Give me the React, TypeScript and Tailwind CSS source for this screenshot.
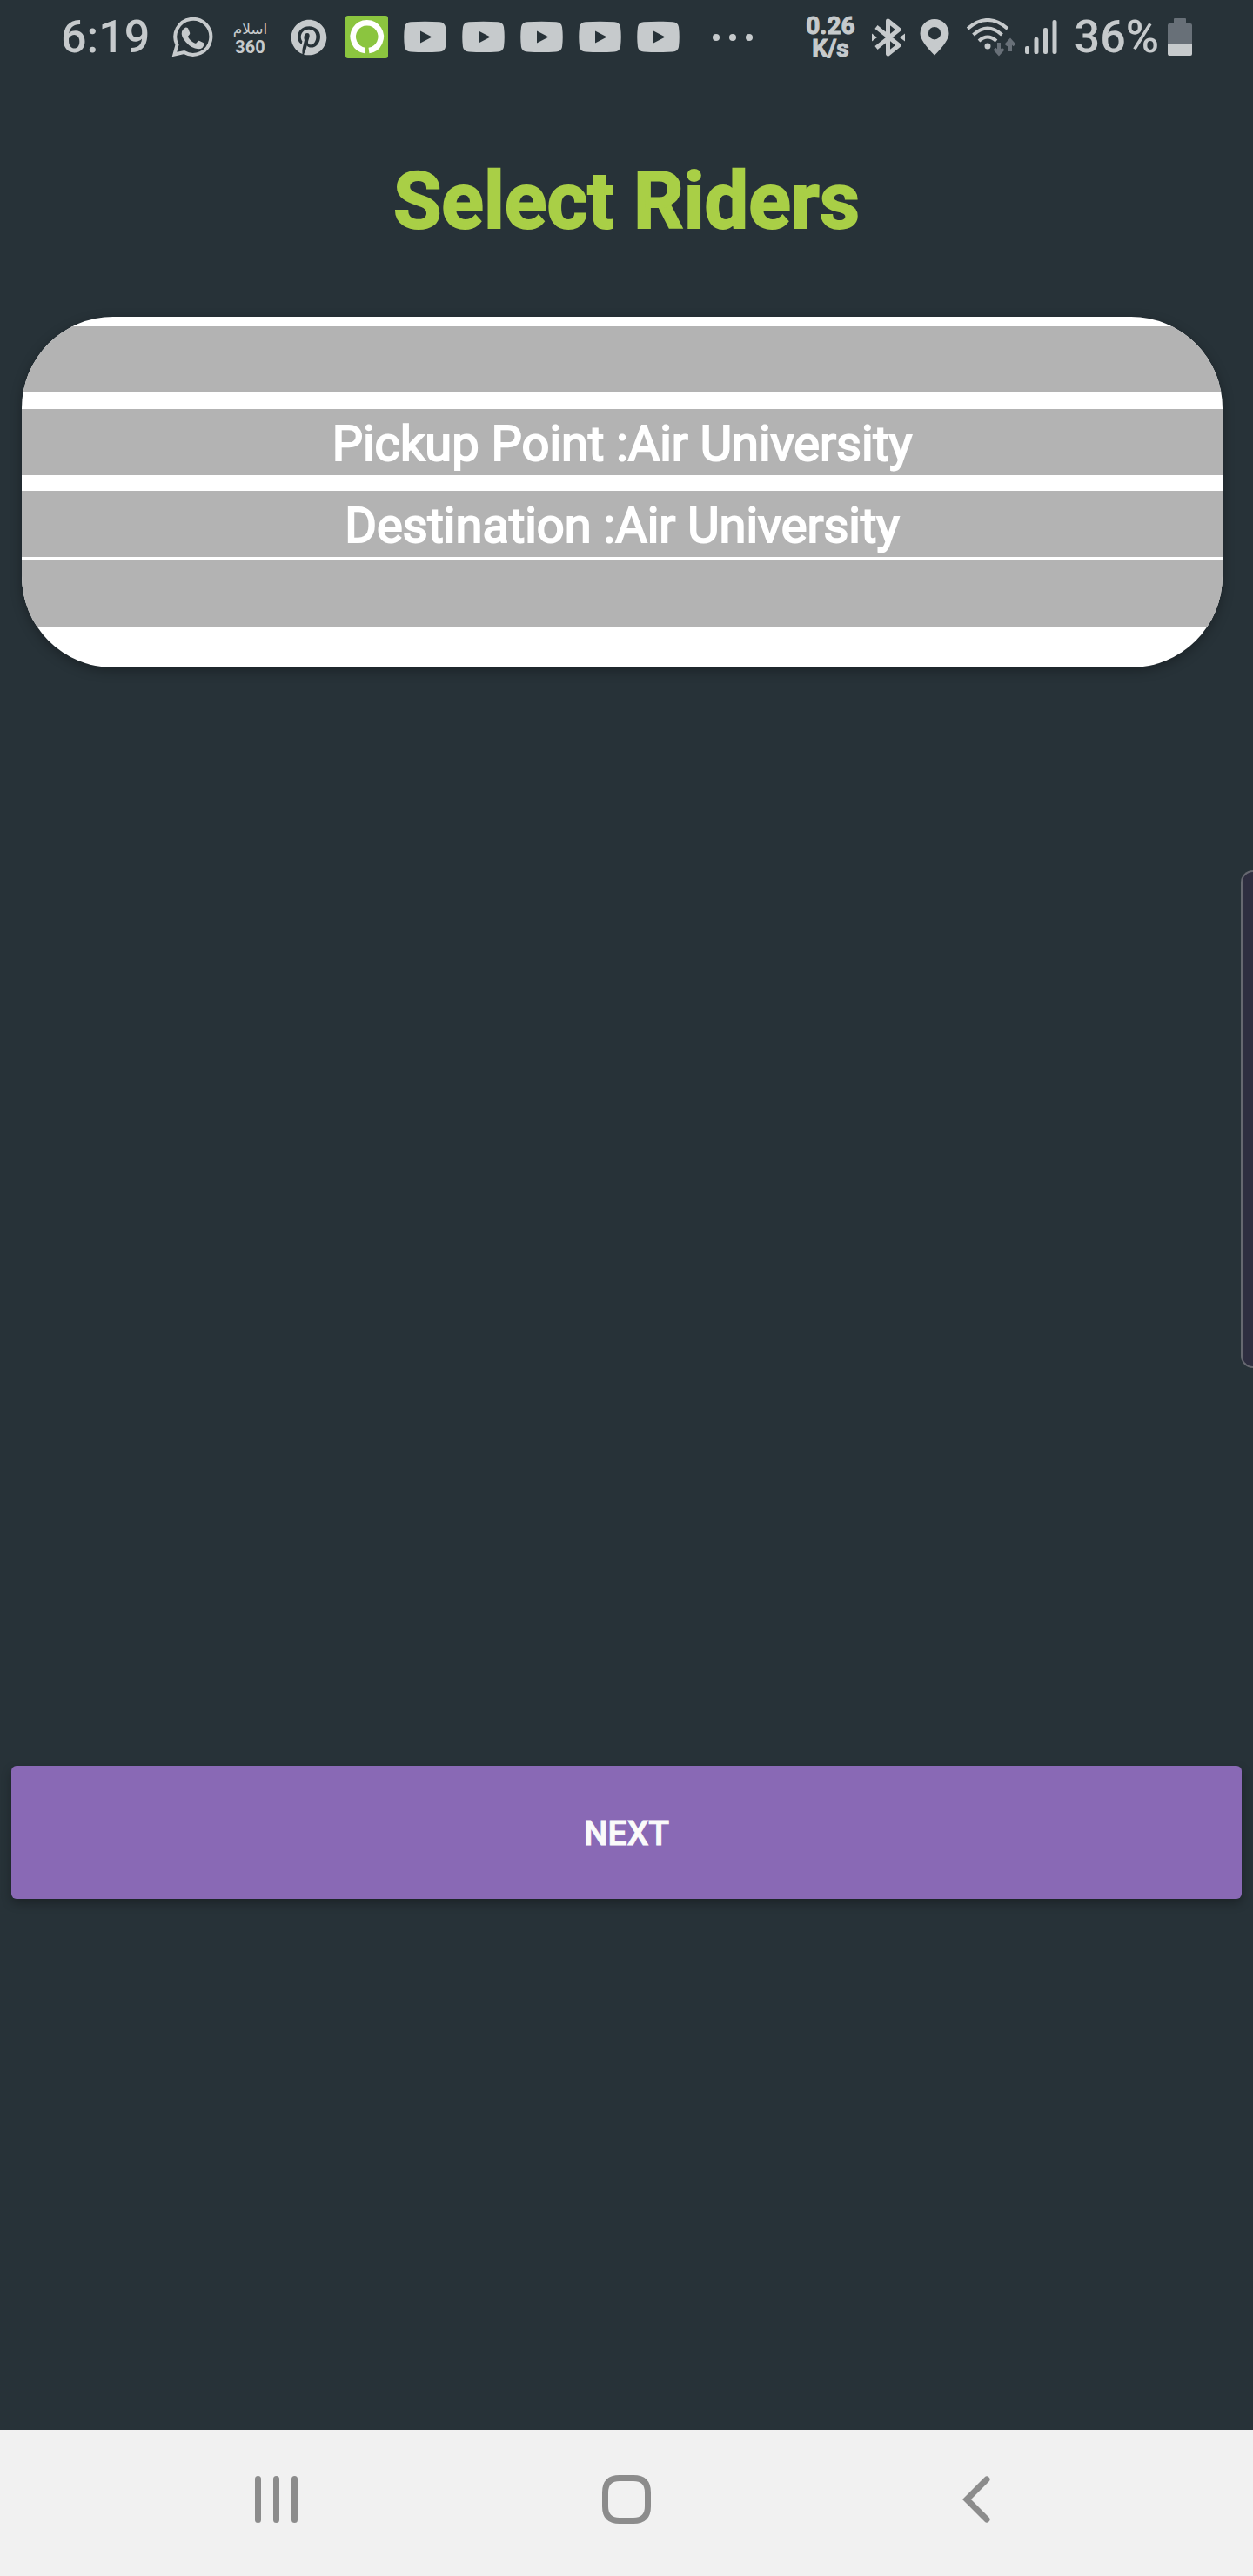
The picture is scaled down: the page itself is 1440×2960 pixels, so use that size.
import React from "react";
import { FaPinterest } from "react-icons/fa";

function WhatsApp() {
  return (
    <svg viewBox="0 0 49 49" className="size-[49px] shrink-0" aria-label="WhatsApp">
      <path d="M4.500 44.500L7.500 33.500A20.500 20.500 0 1 1 15.500 42Z" fill="none" stroke="currentColor" strokeWidth="4" strokeLinejoin="miter" />
      <path d="M16 14.500q1.500-1.500 3.500-.5q.6.300 1 1.500l1.600 4q.4 1.200-.4 2.200l-1.500 1.800q-.4.600 0 1.200q3 5 8 7q.8.300 1.300-.2l2-2.300q.7-.8 1.800-.3l4.200 2q1.200.600 1 1.800q-.8 5.500-6.500 5.500q-8-.5-14.500-8q-6-7-4.500-12q.8-2.500 3-3.700z" fill="currentColor" />
    </svg>
  );
}

function Islam360() {
  return (
    <div className="flex w-[49px] shrink-0 flex-col items-center" aria-label="Islam 360">
      <span lang="ar" dir="rtl" className="font-['DejaVu_Sans',sans-serif] text-[17px] leading-[22px]">
        اسلام
      </span>
      <span className="font-['Liberation_Sans_Narrow','Roboto',sans-serif] text-[20px] leading-[20px] font-bold">360</span>
    </div>
  );
}

function GreenRing() {
  return (
    <svg viewBox="0 0 49 49" className="size-[49px] shrink-0" aria-label="Ring app">
      <rect width="49" height="49" rx="3" fill="#8bc53f" />
      <path d="M22.500 40A16 16 0 1 1 27 40" fill="none" stroke="#fff" strokeWidth="6.500" />
    </svg>
  );
}

function YouTube() {
  return (
    <svg viewBox="0 0 49 49" className="size-[49px] shrink-0" aria-label="YouTube">
      <path fillRule="evenodd" fill="currentColor" d="M8 7.300Q24.500 6 41 7.300Q47 7.600 48 13Q49.500 24.500 48 36Q47 41.200 41 41.600Q24.500 42.600 8 41.600Q2 41.200 1 36Q-.5 24.500 1 13Q2 7.600 8 7.300ZM19 17.500V31.500L32.500 24.500Z" />
    </svg>
  );
}

function Bluetooth() {
  return (
    <svg viewBox="0 0 40 44" className="h-11 w-10" aria-label="Bluetooth">
      <path d="M6 10L32 31L19.500 41V3L32 13L6 34" fill="none" stroke="currentColor" strokeWidth="5" strokeLinejoin="round" />
      <path d="M1 17.500L7 22L1 26.500ZM39 17.500L33 22L39 26.500Z" fill="currentColor" />
    </svg>
  );
}

function Pin() {
  return (
    <svg viewBox="0 0 34 42" className="h-[42px] w-[34px]" aria-label="Location">
      <path fillRule="evenodd" fill="currentColor" d="M17 0A16.500 16.500 0 0 1 33.500 16.500Q33.500 25 17 41.500Q.5 25 .5 16.500A16.500 16.500 0 0 1 17 0ZM17 9A7.200 7.200 0 1 0 17 23.400A7.200 7.200 0 1 0 17 9Z" />
    </svg>
  );
}

function Wifi() {
  return (
    <svg viewBox="0 0 56 44" className="h-11 w-14" aria-label="Wi-Fi">
      <g fill="none" stroke="currentColor" strokeWidth="4">
        <path d="M1 12Q24-8 47 12" />
        <path d="M7.500 19Q24 4 40.500 19" />
        <path d="M14 26Q24 17 34 26" />
      </g>
      <circle cx="24" cy="32" r="3.500" fill="currentColor" />
      <g fill="none" stroke="#687078" strokeWidth="4">
        <path d="M37 28V40M32 35L37 40.500L42 35M50 38V26M45 31L50 25.500L55 31" />
      </g>
    </svg>
  );
}

function Signal() {
  return (
    <svg viewBox="0 0 37 41" className="h-[41px] w-[37px]" fill="currentColor" aria-label="Signal strength">
      <rect x="0" y="31" width="5" height="9" rx="2" />
      <rect x="10.500" y="21" width="5" height="19" rx="2" />
      <rect x="21" y="10" width="5" height="30" rx="2" />
      <rect x="31.500" y="1" width="5" height="39" rx="2" />
    </svg>
  );
}

function Battery() {
  return (
    <svg viewBox="0 0 28 43" className="h-[43px] w-7" aria-label="Battery">
      <path d="M8 0H20Q21 0 21 1V6H26Q28 6 28 8V29H0V8Q0 6 2 6H7V1Q7 0 8 0Z" fill="#687078" />
      <path d="M0 29H28V41Q28 43 26 43H2Q0 43 0 41Z" fill="currentColor" />
    </svg>
  );
}

function StatusBar() {
  return (
    <header className="flex h-[85px] items-center justify-between pr-[70px] pl-[70px] text-[#c6cacc]">
      <div className="flex items-center">
        <time className="w-[126px] text-[52px] leading-none font-medium">6:19</time>
        <div className="flex items-center gap-[18px]">
          <WhatsApp />
          <Islam360 />
          <span className="flex w-[49px] justify-center">
            <FaPinterest className="size-[42px]" />
          </span>
          <GreenRing />
          <YouTube />
          <YouTube />
          <YouTube />
          <YouTube />
          <YouTube />
        </div>
        <div className="ml-[38px] flex gap-[11px]">
          <i className="size-2 rounded-full bg-current" />
          <i className="size-2 rounded-full bg-current" />
          <i className="size-2 rounded-full bg-current" />
        </div>
      </div>
      <div className="flex items-center">
        <p className="mr-[18px] text-center text-[28px] leading-[26px] font-bold [-webkit-text-stroke:1px_currentColor]">
          0.26
          <br />
          K/s
        </p>
        <Bluetooth />
        <span className="w-4" />
        <Pin />
        <span className="w-5" />
        <Wifi />
        <span className="w-[11px]" />
        <Signal />
        <span className="ml-5 mr-2.5 text-[52px] leading-none font-medium">36%</span>
        <Battery />
      </div>
    </header>
  );
}

function NavigationBar() {
  return (
    <nav className="flex h-[168px] items-center justify-center gap-[342px] bg-[#f1f1f1] pb-2 text-[#8c8c8c]">
      <button aria-label="Recent apps" className="flex w-[60px] justify-center">
        <svg viewBox="0 0 50 54" className="h-[54px] w-[50px]" fill="currentColor">
          <rect x="0" width="7" height="54" rx="3.500" />
          <rect x="21" width="7" height="54" rx="3.500" />
          <rect x="42" width="7" height="54" rx="3.500" />
        </svg>
      </button>
      <button aria-label="Home" className="flex w-[60px] justify-center">
        <svg viewBox="0 0 56 56" className="size-14" fill="none" stroke="currentColor" strokeWidth="7">
          <path d="M20 3.500H36Q52.500 3.500 52.500 20V36Q52.500 52.500 36 52.500H20Q3.500 52.500 3.500 36V20Q3.500 3.500 20 3.500Z" />
        </svg>
      </button>
      <button aria-label="Back" className="flex w-[60px] justify-center">
        <svg viewBox="0 0 32 54" className="h-[54px] w-8" fill="none" stroke="currentColor" strokeWidth="7" strokeLinecap="round">
          <path d="M28 4L5 27L28 50" />
        </svg>
      </button>
    </nav>
  );
}

export default function App() {
  return (
    <div className="relative flex min-h-screen flex-col overflow-hidden bg-[#273238] font-['Roboto',sans-serif]">
      <StatusBar />
      <main className="flex grow flex-col">
        <h1 className="mt-[92px] text-center text-[90px] leading-[110px] font-bold text-[#a9cf46] [-webkit-text-stroke:2px_#a9cf46]">Select Riders</h1>
        <section className="mt-[77px] mr-[35px] ml-[25px] overflow-hidden rounded-[105px] bg-white pt-[11px] pb-[47px] text-center text-[56px] leading-[72px] text-white shadow-[0_4px_14px_rgba(0,0,0,0.3)] [-webkit-text-stroke:2px_#fff]">
          <div className="h-[76px] bg-[#b3b3b3]" />
          <p className="mt-[19px] bg-[#b3b3b3] pt-1">Pickup Point :Air University</p>
          <p className="mt-[18px] bg-[#b3b3b3] pt-1">Destination :Air University</p>
          <div className="mt-1 h-[76px] bg-[#b3b3b3]" />
        </section>
        <button className="mx-[13px] mt-[1262px] h-[153px] rounded-md bg-[#8969b5] pt-1 text-[39px] leading-none font-medium text-[#fafafa] shadow-[0_5px_12px_rgba(0,0,0,0.3)] [-webkit-text-stroke:1px_#fafafa]">
          NEXT
        </button>
      </main>
      <NavigationBar />
      <aside
        aria-label="Edge panel"
        className="absolute top-[1000px] right-0 h-[572px] w-3.5 rounded-l-[20px] border-2 border-r-0 border-[#666870] bg-[#2e2e40]"
      />
    </div>
  );
}
